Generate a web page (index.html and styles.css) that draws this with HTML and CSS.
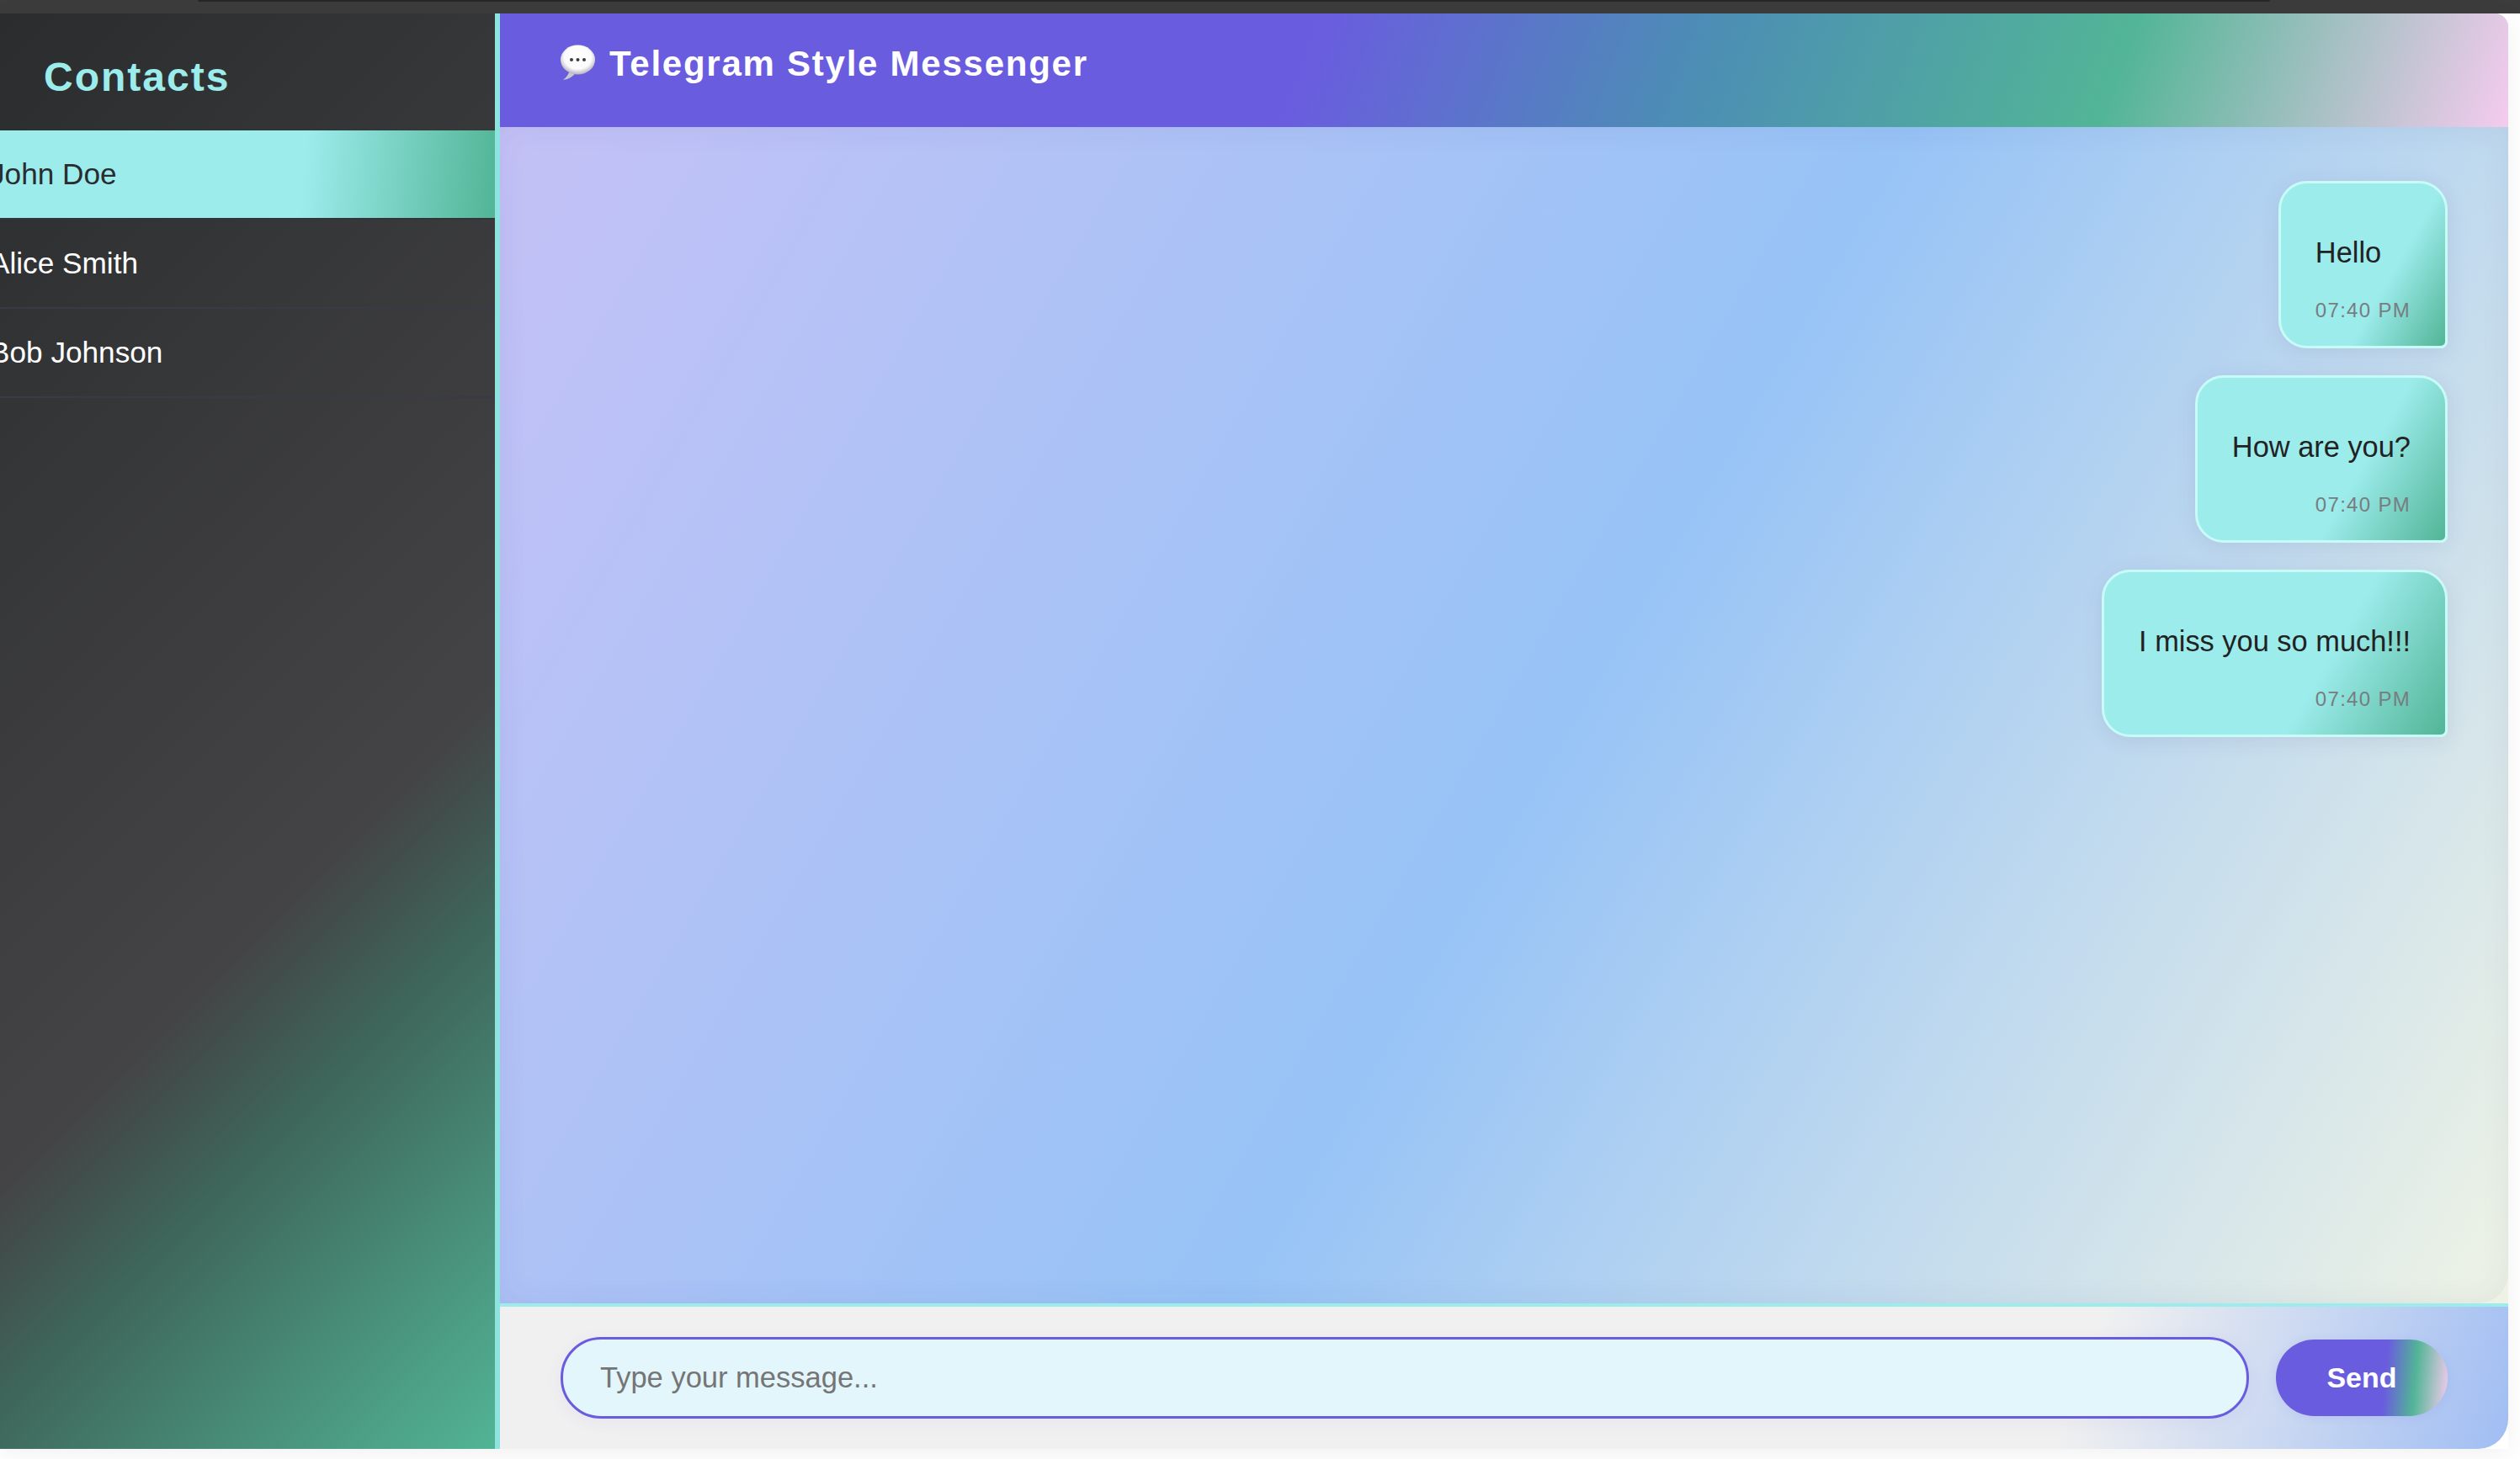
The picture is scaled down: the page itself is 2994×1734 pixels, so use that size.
FILE: index.html
```html
<!DOCTYPE html>
<html lang="en">
<head>
  <meta charset="UTF-8" />
  <title>Telegram Style Messenger</title>
  <link rel="stylesheet" href="styles.css">
</head>
<body>

  <div class="topbar"><div class="topbar-strip"></div></div>

  <div class="app">
    <div class="sidebar">
      <h2 class="sidebar-title">Contacts</h2>
      <ul class="contact-list">
        <li class="contact active"><span>John Doe</span></li>
        <li class="contact"><span>Alice Smith</span></li>
        <li class="contact"><span>Bob Johnson</span></li>
      </ul>
    </div>

    <div class="main">
      <div class="header">
        <svg class="header-icon" viewBox="0 0 41 42" width="41" height="42">
          <defs>
            <radialGradient id="bubble-fill" cx="50%" cy="42%" r="58%">
              <stop offset="0%" stop-color="#ffffff" />
              <stop offset="68%" stop-color="#fbfbfb" />
              <stop offset="100%" stop-color="#b4b2bd" />
            </radialGradient>
          </defs>
          <path fill="#c9c8cf" d="M11 30 C10 35 7 39 3 42 C10 41 15 38 18 33 Z" />
          <ellipse cx="20.5" cy="18" rx="20.5" ry="17.5" fill="url(#bubble-fill)" />
          <circle cx="13" cy="18" r="2" fill="#3a3a3c" />
          <circle cx="20.5" cy="18" r="2" fill="#3a3a3c" />
          <circle cx="28" cy="18" r="2" fill="#3a3a3c" />
        </svg>
        <h1 class="header-title">Telegram Style Messenger</h1>
      </div>

      <div class="chat">
        <div class="message">
          <p class="message-text">Hello</p>
          <p class="message-time">07:40 PM</p>
        </div>
        <div class="message">
          <p class="message-text">How are you?</p>
          <p class="message-time">07:40 PM</p>
        </div>
        <div class="message">
          <p class="message-text">I miss you so much!!!</p>
          <p class="message-time">07:40 PM</p>
        </div>
      </div>

      <div class="composer">
        <input class="composer-input" type="text" placeholder="Type your message...">
        <button class="send-btn">Send</button>
      </div>
    </div>
  </div>

</body>
</html>
```

FILE: styles.css
```css
* {
  box-sizing: border-box;
}
html, body {
  height: 100%;
}
body {
  margin: 0;
  background: #fff;
  font-family: "Liberation Sans", Arial, sans-serif;
  overflow: hidden;
}
.topbar {
  height: 16px;
  background: #3c3c3c;
  padding: 0 297px 0 235px;
}
.topbar-strip {
  height: 2px;
  background: #272727;
  border-radius: 0 0 6px 6px;
}
.app {
  display: flex;
  width: 2980px;
  height: 1706px;
  box-shadow: 0 6px 28px rgba(0, 0, 0, 0.06);
}
.sidebar {
  flex: 0 0 594px;
  border-right: 6px solid #8fe3df;
  background: linear-gradient(135deg, #2b2c2e 0%, #444446 61%, #3e665a 72%, #52b596 100%);
  background-origin: border-box;
  overflow: hidden;
}
.sidebar-title {
  margin: 0;
  padding: 48px 52px 36px;
  font-size: 48px;
  letter-spacing: 2px;
  color: #9cecec;
}
.contact-list {
  list-style: none;
  margin: 0;
  padding: 0;
}
.contact {
  display: flex;
  align-items: center;
  height: 106px;
  border-bottom: 2px solid #383a45;
  font-size: 35.2px;
  color: #fff;
}
.contact span {
  margin-left: -12px;
}
.contact.active {
  background: linear-gradient(95deg, #9cecec 61%, #52b596 100%);
  border-bottom-color: #333437;
  color: #2a2d30;
}
.main {
  flex: 1;
  display: flex;
  flex-direction: column;
  min-width: 0;
  background: linear-gradient(120deg, #c6c1f6 0%, #97c3f6 52%, #f4f6e4 100%);
  border-radius: 0 16px 36px 0;
}
.header {
  display: flex;
  align-items: center;
  gap: 17px;
  height: 135px;
  padding: 0 72px 15px;
  background: linear-gradient(110deg, #6a5cdf 40%, #4c8db5 59%, #52b596 80%, #f5cbee 100%);
  border-top-right-radius: 16px;
}
.header-icon {
  flex: none;
  margin-bottom: 4px;
}
.header-title {
  margin: 0;
  font-size: 42px;
  letter-spacing: 1.75px;
  color: #fff;
}
.chat {
  flex: 1;
  display: flex;
  flex-direction: column;
  align-items: flex-end;
  gap: 32px;
  padding: 64px 72px;
  border-radius: 0 0 36px 0;
  box-shadow: inset 0 0 36px rgba(60, 60, 110, 0.07);
}
.message {
  padding: 63px 41px 28px;
  border: 3px solid #c8fbf8;
  border-radius: 34px 34px 8px 34px;
  background: linear-gradient(120deg, #9cecec 63%, #52b596 100%);
  box-shadow: 0 4px 24px rgba(60, 60, 120, 0.1);
}
.message-text {
  margin: 0 0 35px;
  font-size: 34.4px;
  line-height: 39px;
  color: #222;
}
.message-time {
  margin: 0;
  text-align: right;
  font-size: 24px;
  letter-spacing: 1.3px;
  color: #777d80;
}
.composer {
  display: flex;
  align-items: center;
  gap: 32px;
  flex: 0 0 173px;
  padding: 36px 72px;
  border-top: 4px solid #9cecec;
  border-radius: 0 0 36px 0;
  background: linear-gradient(110deg, #f0f0f0 78%, #a0bdf3 100%);
}
.composer-input {
  flex: 1;
  min-width: 0;
  height: 97px;
  padding: 0 44px;
  border: 3px solid #6a5cdf;
  border-radius: 48px;
  background: #e3f6fb;
  font-family: inherit;
  font-size: 34.5px;
  box-shadow: 0 4px 20px rgba(106, 92, 223, 0.07);
  outline: none;
}
.composer-input::placeholder {
  color: #757575;
  opacity: 1;
}
.send-btn {
  flex: 0 0 204px;
  height: 91px;
  border: none;
  border-radius: 46px;
  background: linear-gradient(95deg, #6a5cdf 63%, #52b596 80%, #f5cbee 100%);
  font-family: inherit;
  font-size: 34px;
  font-weight: bold;
  color: #fff;
  box-shadow: 0 2px 12px rgba(106, 92, 223, 0.1);
  cursor: pointer;
}
```
